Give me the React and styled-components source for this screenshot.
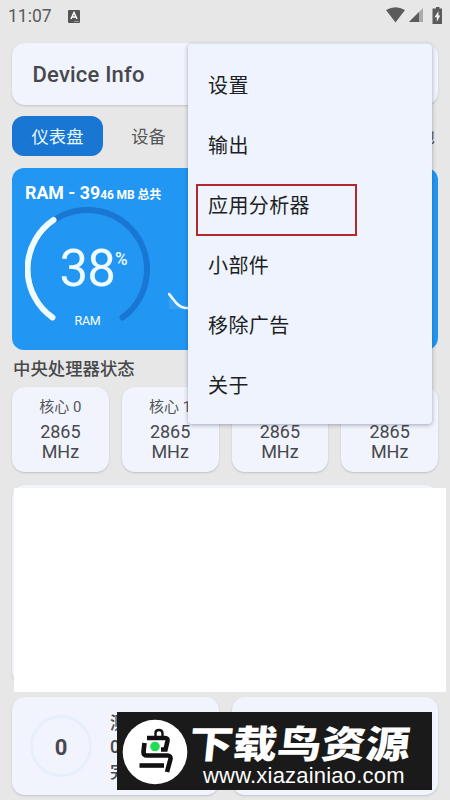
import React from 'react';
import styled, { createGlobalStyle } from 'styled-components';

const GlobalStyle = createGlobalStyle`
  * {
    box-sizing: border-box;
  }

  body {
    margin: 0;
    background: #e7e7e7;
    font-family: Roboto, "Noto Sans CJK SC", sans-serif;
    color: #47484c;
  }
`;

const Screen = styled.div`
  position: relative;
  width: 450px;
  height: 800px;
  overflow: hidden;
  padding: 0 12px;
`;

const StatusBar = styled.div`
  display: flex;
  align-items: center;
  height: 32px;
  margin: 0 -4px;
  color: #5b5b5b;
`;

StatusBar.Time = styled.span`
  width: 60px;
  font-size: 17.5px;
  line-height: 32px;
`;

StatusBar.Icons = styled.div`
  display: flex;
  align-items: center;
  gap: 4px;
  margin-left: auto;
  margin-right: -3px;
  padding-bottom: 2px;
`;

const Card = styled.div`
  background: #f1f4fd;
  border-radius: 13px;
  box-shadow: 0 1px 2px rgba(60, 64, 80, 0.22);
`;

const Header = styled(Card)`
  display: flex;
  align-items: center;
  height: 62px;
  margin-top: 11px;
  padding: 1px 0 0 20.5px;
  font-size: 22px;
  font-weight: 500;
  letter-spacing: 0.2px;
`;

const Tabs = styled.div`
  display: flex;
  align-items: center;
  height: 40px;
  margin-top: 11px;
`;

const Tab = styled.div`
  width: 91px;
  height: 40px;
  padding-top: 1px;
  border-radius: 12px;
  line-height: 41px;
  text-align: center;
  font-size: 17.3px;
  background: ${(p) => (p.$active ? '#1976d2' : 'transparent')};
  color: ${(p) => (p.$active ? '#e8f8ff' : '#55565a')};

  &:last-child {
    margin-left: auto;
    margin-right: -25px;
  }
`;

const RamCard = styled.div`
  position: relative;
  height: 182px;
  margin-top: 12px;
  padding: 13px 13px 0;
  border-radius: 12px;
  background: #2196f3;
  color: #fff;
`;

RamCard.Title = styled.div`
  height: 25px;
  line-height: 24px;
  font-size: 17.8px;
  font-weight: 700;
  white-space: nowrap;

  small {
    font-size: 12px;
    letter-spacing: -0.1px;
  }
`;

const Gauge = styled.div`
  position: relative;
  width: 125px;
  height: 125px;
  margin-top: 1px;

  svg {
    display: block;
  }
`;

Gauge.Value = styled.div`
  position: absolute;
  left: 34.5px;
  top: 32px;
  display: flex;
  font-size: 51px;
  line-height: 60px;
  letter-spacing: -1px;
  color: #eefaff;

  sup {
    font-size: 18px;
    font-weight: 500;
    line-height: 20px;
    margin-top: 10px;
    letter-spacing: 0;
    transform: scaleX(0.95);
    transform-origin: left;
  }
`;

Gauge.Label = styled.div`
  position: absolute;
  left: 0;
  top: 105px;
  width: 100%;
  text-align: center;
  font-size: 12.5px;
  letter-spacing: -0.3px;
  line-height: 17px;
`;

const Sparkline = styled.svg`
  position: absolute;
  left: 156px;
  top: 122px;
`;

const SectionTitle = styled.div`
  height: 37px;
  padding-left: 1px;
  line-height: 39px;
  font-size: 17.4px;
  font-weight: 500;
`;

const Cores = styled.div`
  display: grid;
  grid-template-columns: repeat(4, 1fr);
  gap: 13px;
`;

const Core = styled(Card)`
  height: 85px;
  padding-top: 10px;
  text-align: center;
  font-size: 18px;
  line-height: 20.5px;

  span {
    display: block;
    margin-bottom: 3.5px;
    font-size: 15px;
    line-height: 21px;
    color: #55565a;
  }
`;

const Panel = styled(Card)`
  height: 199px;
  margin-top: 13px;
`;

const Summary = styled.div`
  display: grid;
  grid-template-columns: 1fr 1fr;
  gap: 13px;
  margin-top: 13px;
`;

const Stat = styled(Card)`
  display: flex;
  align-items: center;
  height: 98px;
  padding-left: 18px;
  overflow: hidden;
`;

Stat.Ring = styled.div`
  flex: none;
  display: flex;
  align-items: center;
  justify-content: center;
  width: 62px;
  height: 62px;
  padding-top: 3px;
  border: 3px solid #e7effb;
  border-radius: 50%;
  font-size: 22px;
  font-weight: 700;
`;

Stat.Text = styled.div`
  margin-left: 18px;
  padding-top: 3px;
  font-size: 17.5px;
  font-weight: 500;
  line-height: 24.5px;
  white-space: nowrap;
`;

const Blank = styled.div`
  position: absolute;
  left: 14px;
  top: 488px;
  width: 432px;
  height: 204px;
  background: #fff;
`;

const Menu = styled.div`
  position: absolute;
  left: 188px;
  top: 44px;
  width: 244px;
  height: 380px;
  padding: 10px 0;
  border-radius: 4px;
  background: #eef3fd;
  box-shadow: 0 1px 4px rgba(40, 50, 70, 0.4);
`;

Menu.Item = styled.div`
  position: relative;
  height: 60px;
  padding-left: 20px;
  line-height: 65px;
  font-size: 20px;
  letter-spacing: 0.4px;
  color: #1d1f24;
`;

const Highlight = styled.div`
  position: absolute;
  left: 8px;
  top: 10px;
  width: 161px;
  height: 52px;
  border: 2px solid #b3282d;
`;

const Banner = styled.div`
  position: absolute;
  left: 117px;
  top: 712px;
  width: 315px;
  height: 78px;
  display: flex;
  align-items: center;
  padding: 2px 0 0 5px;
  background: #1a1a1a;
  color: #fff;
`;

Banner.Text = styled.div`
  margin-left: 1px;
  padding-top: 9px;
  white-space: nowrap;
`;

Banner.Name = styled.div`
  height: 41px;
  line-height: 43px;
  font-size: 44.2px;
  font-weight: 900;
  transform: scaleY(0.86) skewX(-5deg);
`;

Banner.Url = styled.div`
  margin-left: 14px;
  height: 24px;
  line-height: 22px;
  font-family: "Liberation Sans", sans-serif;
  font-size: 22px;
  letter-spacing: 0.2px;
`;

const menuItems = ['设置', '输出', '应用分析器', '小部件', '移除广告', '关于'];

function StatusIcons() {
  return (
    <StatusBar.Icons>
      <svg width="19" height="16" viewBox="0 0 19 16">
        <path d="M0 3Q9.500 -2.500 19 3L9.500 15.500Z" fill="currentColor" />
      </svg>
      <svg width="14" height="14" viewBox="0 0 14 14">
        <path d="M14 0V14H0Z" fill="#aaa" />
        <path d="M10 4V14H0Z" fill="currentColor" />
      </svg>
      <svg width="18" height="17" viewBox="0 0 18 17">
        <path d="M7.500 1.500H9V0H12.500V1.500H15V17H5.500V1.500Z" fill="currentColor" />
        <path d="M11.500 4L7.500 10.200H9.800V15L13.300 8.500H11.500Z" fill="#eee" />
      </svg>
    </StatusBar.Icons>
  );
}

function Logo() {
  return (
    <svg width="66" height="66" viewBox="0 0 66 66">
      <circle cx="33" cy="33" r="32.300" fill="#fff" />
      <g fill="none" stroke="#111" strokeWidth="4.600">
        <path d="M33.500 18V14Q33.500 11 37 11Q40.500 11 40.500 14.500V17" strokeWidth="2.400" />
        <path d="M25 19H43Q46 19 45.500 22L43.500 30.500H39" />
        <path d="M22.500 24L21.500 33Q21.500 36.500 25 36.500H45.500Q49 36.500 48.500 40L45 53" />
        <path d="M17.500 46.500H42" />
      </g>
      <circle cx="33" cy="27.500" r="4.800" fill="#22dc55" />
    </svg>
  );
}

export default function App() {
  return (
    <Screen>
      <GlobalStyle />
      <StatusBar>
        <StatusBar.Time>11:07</StatusBar.Time>
        <svg width="12" height="13" viewBox="0 0 12 13">
          <rect width="12" height="13" rx="1" fill="#555" />
          <path d="M3 9L6 2.500L9 9M4 7H8" stroke="#fff" strokeWidth="1.500" fill="none" />
          <path d="M6 11.500H11" stroke="#bbb" strokeWidth="0.700" />
        </svg>
        <StatusIcons />
      </StatusBar>

      <Header>Device Info</Header>

      <Tabs>
        <Tab $active>仪表盘</Tab>
        <Tab>设备</Tab>
        <Tab>电池</Tab>
      </Tabs>

      <RamCard>
        <RamCard.Title>RAM - 39<small>46 MB 总共</small></RamCard.Title>
        <Gauge>
          <svg width="125" height="125" viewBox="0 0 125 125" fill="none" strokeWidth="6" strokeLinecap="round">
            <path d="M27.500 110.500A59.500 59.500 0 1 1 97.500 110.500" stroke="#1976d2" />
            <path d="M27.500 110.500A59.500 59.500 0 0 1 28.500 13" stroke="#eefcff" />
          </svg>
          <Gauge.Value>38<sup>%</sup></Gauge.Value>
          <Gauge.Label>RAM</Gauge.Label>
        </Gauge>
        <Sparkline width="60" height="24" viewBox="0 0 60 24">
          <path d="M1 4C6 9 9 17 17 18H60V19H1Z" fill="#359ff4" />
          <path d="M1 4C6 9 9 17 17 18H60" fill="none" stroke="#eefcff" strokeWidth="2.500" strokeLinecap="round" />
        </Sparkline>
      </RamCard>

      <SectionTitle>中央处理器状态</SectionTitle>
      <Cores>
        {[0, 1, 2, 3].map((core) => (
          <Core key={core}>
            <span>核心 {core}</span>
            2865<br />MHz
          </Core>
        ))}
      </Cores>

      <Panel />

      <Summary>
        <Stat>
          <Stat.Ring>0</Stat.Ring>
          <Stat.Text>测试<br />0/0<br />完成</Stat.Text>
        </Stat>
        <Stat />
      </Summary>

      <Blank />

      <Menu>
        {menuItems.map((item) => (
          <Menu.Item key={item}>
            {item}
            {item === '应用分析器' && <Highlight />}
          </Menu.Item>
        ))}
      </Menu>

      <Banner>
        <Logo />
        <Banner.Text>
          <Banner.Name>下载鸟资源</Banner.Name>
          <Banner.Url>www.xiazainiao.com</Banner.Url>
        </Banner.Text>
      </Banner>
    </Screen>
  );
}
